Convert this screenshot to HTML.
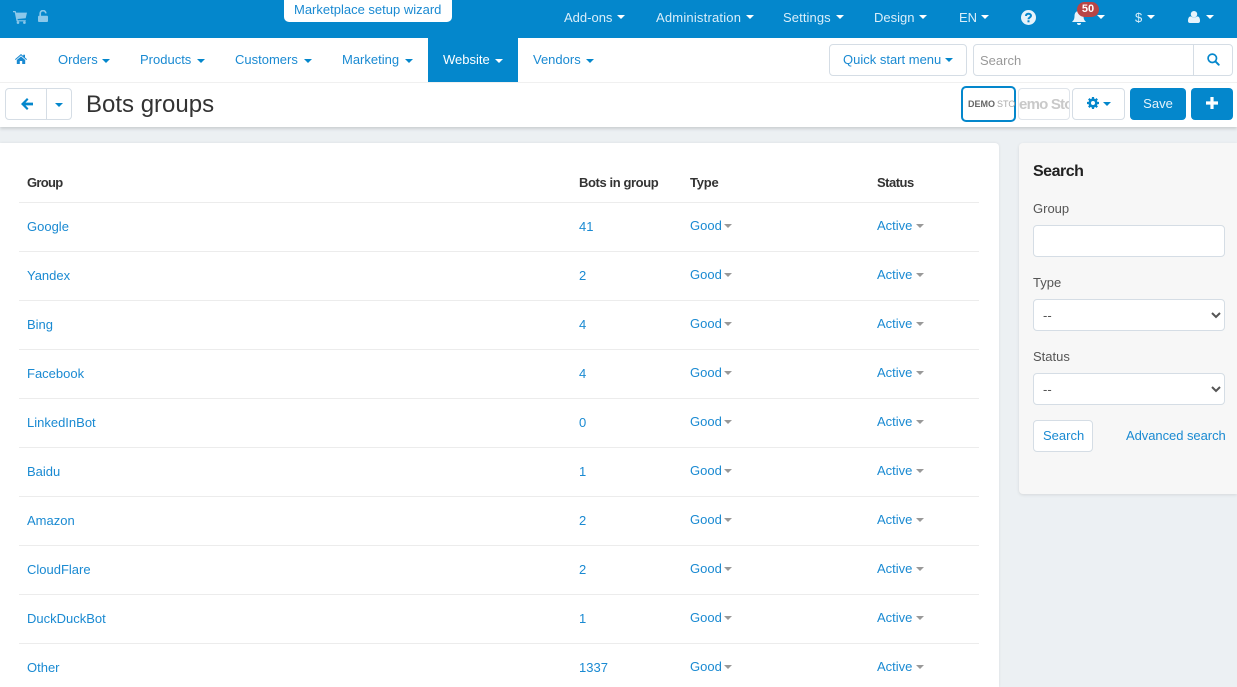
<!DOCTYPE html>
<html lang="en"><head><meta charset="utf-8"><title>Bots groups</title>
<style>
html,body{margin:0;padding:0;width:1237px;height:687px;overflow:hidden}
body{position:relative;background:#ecf0f3;font-family:"Liberation Sans",Arial,sans-serif;font-size:13px;color:#333}
.a{position:absolute}
.t{position:absolute;white-space:nowrap;line-height:16px}
.c{position:absolute;width:0;height:0;border-left:4px solid transparent;border-right:4px solid transparent;border-top:4px solid #0487cc}
.w{border-top-color:#fff}
.top{color:#d9eefa}
.l{color:#1a8ad2}
.b{position:absolute;box-sizing:border-box;border:1px solid #d5dde5;border-radius:4px;background:#fff}
.r{position:absolute;left:19px;width:960px;height:49px;border-top:1px solid #ececec;box-sizing:border-box}
.r span{position:absolute;white-space:nowrap;line-height:16px;color:#1a8ad2}
.r .n{left:8px;top:16px}.r .q{left:560px;top:16px}.r .y{left:671px;top:15px}.r .s{left:858px;top:15px}
.r i{position:absolute;top:21px;width:0;height:0;border-left:4px solid transparent;border-right:4px solid transparent;border-top:4px solid #999}
.r .ci{left:705px}.r .cj{left:897px}
select{position:absolute;left:1033px;width:192px;height:32px;box-sizing:border-box;border:1px solid #d5dde5;border-radius:4px;background:#fff;font:13px "Liberation Sans",sans-serif;color:#555;padding-left:5px}
svg{position:absolute;display:block}
</style></head><body>

<div class="a" style="left:0;top:0;width:1237px;height:38px;background:#0487cc"></div>
<svg style="left:13px;top:11px" width="14" height="13" viewBox="0 0 14 13"><path fill="#8cc8ea" d="M0 0h2.600l.5 1.600H14l-1.300 5.600-8.200.8.300 1.200h8v1.200H3.600L1.700 1.200H0z"/><circle cx="5" cy="11.600" r="1.300" fill="#8cc8ea"/><circle cx="11.400" cy="11.600" r="1.300" fill="#8cc8ea"/></svg>
<svg style="left:38px;top:10px" width="10" height="12" viewBox="0 0 10 12"><rect x="0" y="5.800" width="10" height="6.200" rx="1" fill="#8cc8ea"/><path fill="none" stroke="#8cc8ea" stroke-width="1.700" d="M2.200 6V3.400a2.800 2.800 0 0 1 5.600 0"/></svg>
<div class="a" style="left:284px;top:-3px;width:168px;height:25px;background:#fff;border-radius:0 0 5px 5px"></div>
<span class="t l" style="left:294px;top:2px">Marketplace setup wizard</span>

<span class="t top" style="left:564px;top:10px">Add-ons</span><i class="c w" style="left:617px;top:15px"></i>
<span class="t top" style="left:656px;top:10px;letter-spacing:.2px">Administration</span><i class="c w" style="left:746px;top:15px"></i>
<span class="t top" style="left:783px;top:10px;letter-spacing:.1px">Settings</span><i class="c w" style="left:836px;top:15px"></i>
<span class="t top" style="left:874px;top:10px">Design</span><i class="c w" style="left:919px;top:15px"></i>
<span class="t top" style="left:959px;top:10px">EN</span><i class="c w" style="left:981px;top:15px"></i>
<svg style="left:1021px;top:10px" width="15" height="15" viewBox="0 0 15 15"><circle cx="7.500" cy="7.500" r="7.500" fill="#e6f3fb"/><path fill="none" stroke="#0487cc" stroke-width="2" d="M5 6c0-1.600 1.100-2.300 2.500-2.300S10 4.500 10 5.700c0 1.700-2.500 1.700-2.500 3.500"/><rect x="6.500" y="10.300" width="2" height="2" fill="#0487cc"/></svg>
<svg style="left:1072px;top:11px" width="14" height="14" viewBox="0 0 14 14"><path fill="#e6f3fb" d="M7 0c3 0 4.500 2 4.500 5 0 3 1 4.500 2.500 6H0c1.500-1.500 2.500-3 2.500-6C2.500 2 4 0 7 0zM5 12h4a2 2 0 0 1-4 0z"/></svg>
<div class="a" style="left:1077px;top:2px;width:22px;height:15px;border-radius:8px;background:#b84545"></div>
<span class="t" style="left:1077px;top:2px;width:22px;text-align:center;color:#fff;font-size:11px;font-weight:bold;line-height:15px">50</span>
<i class="c w" style="left:1097px;top:15px"></i>
<span class="t top" style="left:1135px;top:10px">$</span><i class="c w" style="left:1147px;top:15px"></i>
<svg style="left:1188px;top:11px" width="12" height="12" viewBox="0 0 12 12"><ellipse cx="6" cy="3.200" rx="3.200" ry="3.200" fill="#e6f3fb"/><path fill="#e6f3fb" d="M0 10c0-3 1-4.600 3-4.600 1 .8 2 1.100 3 1.100s2-.3 3-1.100c2 0 3 1.600 3 4.600 0 1.200-.8 2-2 2H2c-1.200 0-2-.8-2-2z"/></svg>
<i class="c w" style="left:1206px;top:15px"></i>

<div class="a" style="left:0;top:83px;width:1237px;height:44px;background:#fff;box-shadow:0 2px 3px rgba(0,0,0,.14)"></div>
<div class="a" style="left:0;top:38px;width:1237px;height:45px;background:#fff;border-bottom:1px solid #f0f0f0;box-sizing:border-box"></div>
<svg style="left:15px;top:54px" width="12" height="10" viewBox="0 0 12 10"><path fill="#1a8ad2" d="M6 0l2.200 1.900V.8h1.800v2.700L12 5.200l-.7.8L6 1.400.7 6 0 5.200z"/><path fill="#1a8ad2" d="M1.800 6L6 2.400 10.200 6v4H7.200V7H4.800v3H1.800z"/></svg>
<span class="t l" style="left:58px;top:52px">Orders</span><i class="c" style="left:102px;top:59px"></i>
<span class="t l" style="left:140px;top:52px">Products</span><i class="c" style="left:197px;top:59px"></i>
<span class="t l" style="left:235px;top:52px">Customers</span><i class="c" style="left:304px;top:59px"></i>
<span class="t l" style="left:342px;top:52px">Marketing</span><i class="c" style="left:405px;top:59px"></i>
<div class="a" style="left:428px;top:38px;width:90px;height:44px;background:#0487cc"></div>
<span class="t" style="left:443px;top:52px;color:#fff">Website</span><i class="c w" style="left:495px;top:59px"></i>
<span class="t l" style="left:533px;top:52px">Vendors</span><i class="c" style="left:586px;top:59px"></i>

<div class="b" style="left:829px;top:44px;width:138px;height:32px"></div>
<span class="t l" style="left:843px;top:52px">Quick start menu</span><i class="c" style="left:945px;top:58px"></i>
<div class="b" style="left:973px;top:44px;width:260px;height:32px"></div>
<div class="a" style="left:1193px;top:45px;width:1px;height:30px;background:#d5dde5"></div>
<span class="t" style="left:980px;top:53px;color:#999">Search</span>
<svg style="left:1207px;top:53px" width="13" height="13" viewBox="0 0 13 13"><circle cx="5.300" cy="5.300" r="4.200" fill="none" stroke="#0487cc" stroke-width="1.700"/><path stroke="#0487cc" stroke-width="2" stroke-linecap="round" d="M8.700 8.700l3 3"/></svg>

<div class="b" style="left:5px;top:88px;width:67px;height:32px"></div>
<div class="a" style="left:46px;top:89px;width:1px;height:30px;background:#d5dde5"></div>
<svg style="left:21px;top:98px" width="12" height="12" viewBox="0 0 13 13"><path fill="#0487cc" d="M6.500 0l1.600 1.600-3.200 3.400H13v3H4.900l3.200 3.400L6.500 13 0 6.500z"/></svg>
<i class="c" style="left:55px;top:103px"></i>
<span class="t" style="left:86px;top:91px;font-size:24px;line-height:28px;color:#333">Bots groups</span>

<div class="a" style="left:961px;top:86px;width:55px;height:36px;box-sizing:border-box;border:2px solid #0487cc;border-radius:5px;background:#fff;z-index:3"></div>
<div class="b" style="left:1018px;top:88px;width:52px;height:32px;overflow:hidden;border-color:#dfe4ea"><span class="t" style="left:-10px;top:8px;font-size:15px;letter-spacing:-.8px;font-weight:bold;color:#c9c9c9">Demo Store</span></div>
<span class="t" style="left:968px;top:96px;font-size:9px;font-weight:bold;color:#666;z-index:4">DEMO</span>
<span class="t" style="left:997px;top:96px;font-size:9px;color:#aaa;z-index:4;width:18px;overflow:hidden">STO</span>
<div class="b" style="left:1072px;top:88px;width:53px;height:32px"></div>
<svg style="left:1087px;top:97px" width="12" height="12" viewBox="0 0 12 12"><circle cx="6" cy="6" r="3.300" fill="none" stroke="#0487cc" stroke-width="2.600"/><path stroke="#0487cc" stroke-width="2.200" d="M6 0v12M0 6h12M1.800 1.800l8.400 8.400M10.200 1.800l-8.400 8.400" stroke-dasharray="2.200 7.600"/></svg>
<i class="c" style="left:1103px;top:102px"></i>
<div class="a" style="left:1130px;top:88px;width:56px;height:32px;background:#0487cc;border-radius:4px"></div>
<span class="t" style="left:1130px;top:96px;width:56px;text-align:center;color:#e6f3fb">Save</span>
<div class="a" style="left:1191px;top:88px;width:42px;height:32px;background:#0487cc;border-radius:4px"></div>
<svg style="left:1206px;top:97px" width="12" height="12" viewBox="0 0 12 12"><path fill="#fff" d="M4.400 0h3.200v4.400H12v3.200H7.600V12H4.400V7.600H0V4.400h4.400z"/></svg>

<div class="a" style="left:0;top:143px;width:999px;height:544px;background:#fff;border-radius:0 4px 0 0;box-shadow:0 0 3px rgba(0,0,0,.08)"></div>
<span class="t" style="left:27px;top:175px;font-weight:bold;letter-spacing:-.7px">Group</span>
<span class="t" style="left:579px;top:175px;font-weight:bold;letter-spacing:-.4px">Bots in group</span>
<span class="t" style="left:690px;top:175px;font-weight:bold;letter-spacing:-.2px">Type</span>
<span class="t" style="left:877px;top:175px;font-weight:bold;letter-spacing:-.5px">Status</span>

<div class="r" style="top:202px"><span class="n">Google</span><span class="q">41</span><span class="y">Good</span><i class="ci"></i><span class="s">Active</span><i class="cj"></i></div>
<div class="r" style="top:251px"><span class="n">Yandex</span><span class="q">2</span><span class="y">Good</span><i class="ci"></i><span class="s">Active</span><i class="cj"></i></div>
<div class="r" style="top:300px"><span class="n">Bing</span><span class="q">4</span><span class="y">Good</span><i class="ci"></i><span class="s">Active</span><i class="cj"></i></div>
<div class="r" style="top:349px"><span class="n">Facebook</span><span class="q">4</span><span class="y">Good</span><i class="ci"></i><span class="s">Active</span><i class="cj"></i></div>
<div class="r" style="top:398px"><span class="n">LinkedInBot</span><span class="q">0</span><span class="y">Good</span><i class="ci"></i><span class="s">Active</span><i class="cj"></i></div>
<div class="r" style="top:447px"><span class="n">Baidu</span><span class="q">1</span><span class="y">Good</span><i class="ci"></i><span class="s">Active</span><i class="cj"></i></div>
<div class="r" style="top:496px"><span class="n">Amazon</span><span class="q">2</span><span class="y">Good</span><i class="ci"></i><span class="s">Active</span><i class="cj"></i></div>
<div class="r" style="top:545px"><span class="n">CloudFlare</span><span class="q">2</span><span class="y">Good</span><i class="ci"></i><span class="s">Active</span><i class="cj"></i></div>
<div class="r" style="top:594px"><span class="n">DuckDuckBot</span><span class="q">1</span><span class="y">Good</span><i class="ci"></i><span class="s">Active</span><i class="cj"></i></div>
<div class="r" style="top:643px;height:44px"><span class="n">Other</span><span class="q">1337</span><span class="y">Good</span><i class="ci"></i><span class="s">Active</span><i class="cj"></i></div>

<div class="a" style="left:1019px;top:143px;width:218px;height:351px;background:#f7f7f7;border-radius:4px 0 0 4px;box-shadow:0 1px 3px rgba(0,0,0,.1)"></div>
<span class="t" style="left:1033px;top:162px;font-size:16px;font-weight:bold;letter-spacing:-.5px;line-height:18px;color:#222;margin-top:1px">Search</span>
<span class="t" style="left:1033px;top:201px;color:#555">Group</span>
<div class="b" style="left:1033px;top:225px;width:192px;height:32px"></div>
<span class="t" style="left:1033px;top:275px;color:#555">Type</span>
<select style="top:299px"><option>--</option></select>
<span class="t" style="left:1033px;top:349px;color:#555">Status</span>
<select style="top:373px"><option>--</option></select>
<div class="b" style="left:1033px;top:420px;width:60px;height:32px"></div>
<span class="t l" style="left:1043px;top:428px">Search</span>
<span class="t l" style="left:1126px;top:428px;letter-spacing:-.05px">Advanced search</span>

</body></html>
